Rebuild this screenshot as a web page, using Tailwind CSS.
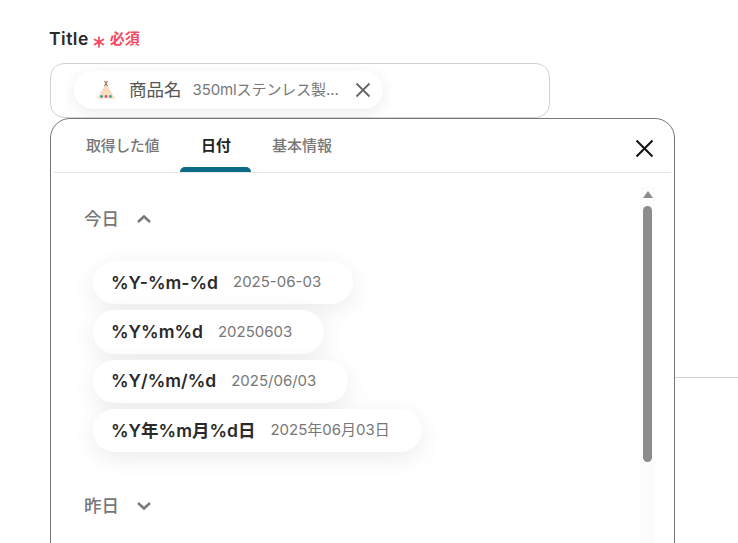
<!DOCTYPE html>
<html lang="ja">
<head>
  <meta charset="UTF-8" />
  <title>Title</title>
  <script src="https://cdn.jsdelivr.net/npm/@tailwindcss/browser@4"></script>
</head>
<body class="bg-white">
  <div class="relative h-[543px] w-[738px] overflow-hidden pl-[50px] pt-[28px] font-['Inter','Noto_Sans_CJK_JP',sans-serif] text-[#2a2a2a]">
    <!-- field label -->
    <div class="flex h-[22px] items-center">
      <span class="-ml-[1px] pt-[1px] text-[17.5px] font-semibold tracking-[0.5px]">Title</span>
      <svg class="ml-[4px] mt-[5px] h-[12px] w-[12px]" viewBox="0 0 12 12" fill="none" stroke="#f6495f" stroke-width="1.7" stroke-linecap="round">
        <path d="M6 1v10M1.6 3.4l8.8 5.2M10.4 3.4l-8.8 5.2" />
      </svg>
      <span class="ml-[5px] pt-[1px] text-[15px] font-semibold text-[#f6495f]">必須</span>
    </div>

    <!-- input with selected chip -->
    <div class="mt-[13px] h-[55px] w-[500px] rounded-[14px] border border-[#ced3da] pl-[23px] pt-[7px]">
      <div class="flex h-[38px] w-[309px] items-center rounded-full bg-white pl-[22px] shadow-[0_4px_16px_rgba(0,0,0,0.08)]">
        <svg class="h-[20px] w-[20px] shrink-0" viewBox="0 0 20 20">
          <path d="M10 3.5L19 18.5H1z" fill="#fbdcc0" />
          <path d="M8.5 1l3 5M11.5 1l-3 5" fill="none" stroke="#9a7a6c" stroke-width="1.2" />
          <circle cx="5.5" cy="16.5" r="1.4" fill="#2cab97" />
          <circle cx="10" cy="16.5" r="1.4" fill="#e2566d" />
          <circle cx="14.5" cy="16.5" r="1.4" fill="#2cab97" />
        </svg>
        <span class="ml-[13px] text-[17.5px] font-normal text-[#555]">商品名</span>
        <span class="ml-[11px] w-[146px] text-[15px] tracking-[-0.1px] whitespace-nowrap text-[#777]">350mlステンレス製...</span>
        <svg class="ml-[16px] h-[16px] w-[16px]" viewBox="0 0 16 16" fill="none" stroke="#666" stroke-width="1.8">
          <path d="M1.5 1.5l13 13M14.5 1.5l-13 13" />
        </svg>
      </div>
    </div>

    <!-- rule of the page behind the popover -->
    <div class="absolute left-[675px] top-[377px] h-px w-[63px] bg-[#d0d0d0]"></div>

    <!-- popover -->
    <div class="absolute left-[50px] top-[118px] h-[460px] w-[625px] rounded-[20px] border border-[#767676] bg-white">
      <div class="mx-[3px] flex h-[54px] border-b border-[#e4e6e9] pl-[32px] text-[15px] font-medium text-[#777]">
        <div class="pt-[16px] tracking-[-0.4px]">取得した値</div>
        <div class="relative ml-[42px] pt-[16px] font-semibold text-[#222]">
          日付
          <div class="absolute -left-[21px] bottom-0 h-[5px] w-[71px] rounded-t-[5px] bg-[#0b6a84]"></div>
        </div>
        <div class="ml-[41px] pt-[16px]">基本情報</div>
      </div>
      <svg class="absolute right-[20px] top-[20px] h-[19px] w-[19px]" viewBox="0 0 19 19" fill="none" stroke="#111" stroke-width="2">
        <path d="M1.5 1.5l16 16M17.5 1.5l-16 16" />
      </svg>

      <!-- scrollbar -->
      <div class="absolute left-[589px] top-[68px] h-[360px] w-[15px] bg-[#fcfcfc]">
        <div class="mx-auto mt-[4px] h-0 w-0 border-x-[5px] border-b-[7px] border-x-transparent border-b-[#8c8c8c]"></div>
        <div class="mx-auto mt-[8px] h-[256px] w-[9px] rounded-full bg-[#8c8c8c]"></div>
      </div>

      <div class="pl-[33px]">
        <div class="mt-[35px] flex h-[22px] items-center text-[17.5px] font-medium text-[#777]">
          今日
          <svg class="ml-[17px] h-[10px] w-[16px]" viewBox="0 0 16 10" fill="none" stroke="#777" stroke-width="2.4">
            <path d="M2 8l6-5.5L14 8" />
          </svg>
        </div>

        <div class="ml-[9px] mt-[31px] flex flex-col items-start gap-[6px]">
          <div class="flex h-[43.33px] items-center rounded-full bg-white pl-[18px] pr-[32px] shadow-[0_6px_24px_rgba(0,0,0,0.08)]">
            <span class="text-[17.5px] font-semibold">%Y-%m-%d</span>
            <span class="ml-[15px] text-[15px] text-[#777]">2025-06-03</span>
          </div>
          <div class="flex h-[43.33px] items-center rounded-full bg-white pl-[18px] pr-[32px] shadow-[0_6px_24px_rgba(0,0,0,0.08)]">
            <span class="text-[17.5px] font-semibold">%Y%m%d</span>
            <span class="ml-[15px] text-[15px] text-[#777]">20250603</span>
          </div>
          <div class="flex h-[43.33px] items-center rounded-full bg-white pl-[18px] pr-[32px] shadow-[0_6px_24px_rgba(0,0,0,0.08)]">
            <span class="text-[17.5px] font-semibold">%Y/%m/%d</span>
            <span class="ml-[15px] text-[15px] text-[#777]">2025/06/03</span>
          </div>
          <div class="flex h-[43.33px] items-center rounded-full bg-white pl-[18px] pr-[32px] shadow-[0_6px_24px_rgba(0,0,0,0.08)]">
            <span class="text-[17.5px] font-semibold">%Y年%m月%d日</span>
            <span class="ml-[15px] text-[15px] text-[#777]">2025年06月03日</span>
          </div>
        </div>

        <div class="mt-[43px] flex h-[22px] items-center text-[17.5px] font-medium text-[#777]">
          昨日
          <svg class="ml-[17px] h-[10px] w-[16px]" viewBox="0 0 16 10" fill="none" stroke="#777" stroke-width="2.4">
            <path d="M2 2l6 5.5L14 2" />
          </svg>
        </div>
      </div>
    </div>
  </div>
</body>
</html>
